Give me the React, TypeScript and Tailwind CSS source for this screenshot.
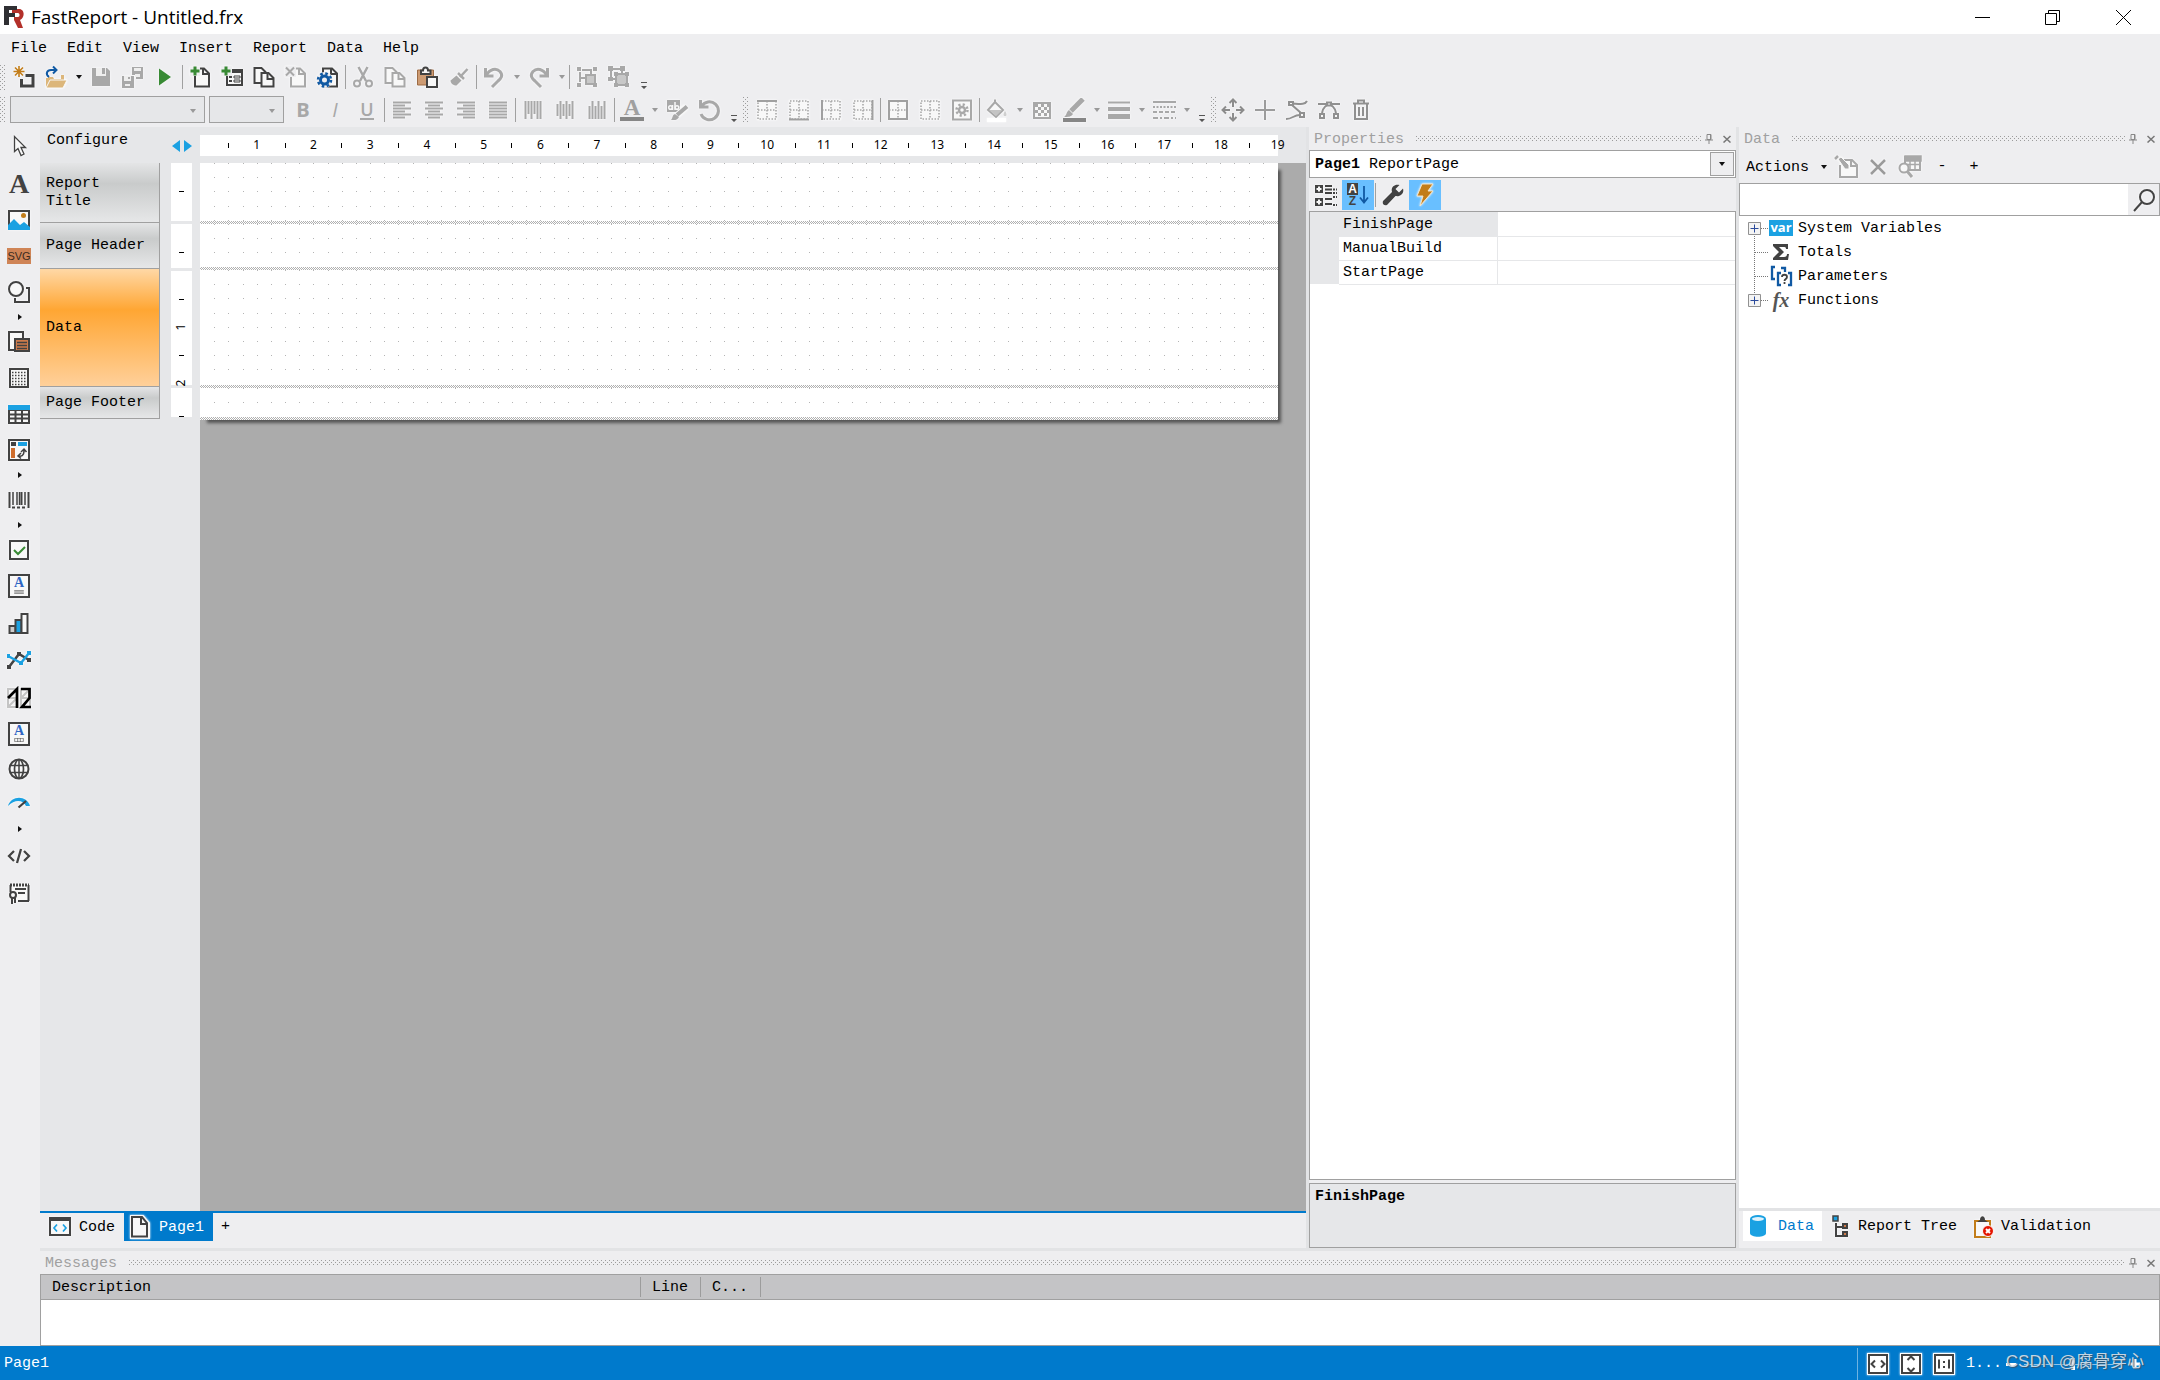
import React, { useId } from "react";

const D = "#424242";
const G = "#a8a8a8";
const W = "#f8f8f8";
const B = "#1ba1e2";
const N = "#1059a3";
const GR = "#388a34";
const OR = "#c27d1a";

const pagePath = "M7 3.500h9l5 5v13H7z";

const icons: Record<string, React.ReactNode> = {
  create: (
    <>
      <path d="M13.5 10.5H21v10.5H9.5v-7" fill="none" stroke={D} strokeWidth="3" />
      <path d="M7 1v11M1.500 6.500h11M3 2.500l8 8M11 2.500l-8 8" stroke={OR} strokeWidth="1.600" />
    </>
  ),
  open: (
    <>
      <path d="M2 22V13h2v-1h5l1 2h7l0-4h3v6" fill="#dcb67a" />
      <path d="M6 15h17l-4 8H2z" fill="#dcb67a" stroke={W} strokeWidth="1" />
      <path d="M5 12c-4-3-2-7 2-7h5M9 1.500L12.500 5 9 8.500" fill="none" stroke={N} strokeWidth="2" />
    </>
  ),
  save: (
    <>
      <path d="M3 3h15l3 3v15H3z" fill={G} />
      <path d="M7 3h10v8H7z" fill="#eee" />
      <path d="M13 3h3v6h-3z" fill={G} />
    </>
  ),
  saveAll: (
    <>
      <path d="M11 2h11v12h-7v-4h-4z" fill={G} />
      <path d="M13 3h7v3h-7zM14 9h5v3h-5z" fill="#eee" />
      <path d="M1 11h12v12H1z" fill={G} />
      <path d="M3 11h7v5H3zM4 19h5v2H4z" fill="#eee" />
      <path d="M7 12h2v2H7z" fill={G} />
    </>
  ),
  play: <path d="M6 3.500l12 8.500-12 8.500z" fill={GR} />,
  newPage: (
    <>
      <path d={pagePath} fill={W} stroke={D} strokeWidth="2" />
      <path d="M15 3v6h6" fill="none" stroke={D} strokeWidth="2" />
      <path d="M2 2h10v9H2z" fill="#eeeef0" />
      <path d="M7 1.500v9M2.500 6h9" stroke={GR} strokeWidth="3" />
    </>
  ),
  newDialog: (
    <>
      <path d="M7 5h15v15H7z" fill={W} stroke={D} strokeWidth="2" />
      <path d="M7 4h16v4H7z" fill={D} />
      <path d="M9 12h3M9 16h3" stroke={D} strokeWidth="2" />
      <path d="M14 11h6v2h-6zM14 15h6v2h-6z" fill="none" stroke={D} />
      <path d="M1 1h11v10H1z" fill="#eeeef0" />
      <path d="M6 1.500v9M1.500 6h9" stroke={GR} strokeWidth="3" />
    </>
  ),
  copyPage: (
    <>
      <path d="M2.500 3h7l4 4v11h-11z" fill={W} stroke={D} strokeWidth="2" />
      <path d="M9.500 8h7l5 5v8.500h-12z" fill={W} stroke={D} strokeWidth="2" />
      <path d="M15.500 8v6h6" fill="none" stroke={D} strokeWidth="2" />
    </>
  ),
  deletePage: (
    <>
      <path d={pagePath} fill={W} stroke={G} strokeWidth="2" />
      <path d="M15 3v6h6" fill="none" stroke={G} strokeWidth="2" />
      <path d="M1 1h11v11H1z" fill="#eeeef0" />
      <path d="M2 2.500l8 8M10 2.500l-8 8" stroke={G} strokeWidth="2" />
    </>
  ),
  pageSettings: (
    <>
      <path d={pagePath} fill={W} stroke={D} strokeWidth="2" />
      <path d="M15 3v6h6" fill="none" stroke={D} strokeWidth="2" />
      <circle cx="8.500" cy="15" r="8" fill="#eeeef0" />
      <circle cx="8.500" cy="15" r="4" fill="none" stroke={N} strokeWidth="3" />
      <circle cx="8.500" cy="15" r="6.500" fill="none" stroke={N} strokeWidth="2.500" strokeDasharray="2.550 2.550" />
    </>
  ),
  cut: (
    <g fill="none" stroke={G} strokeWidth="2">
      <path d="M7.500 2l7.500 14M16.500 2L9 16" strokeWidth="2.500" />
      <circle cx="6" cy="18.500" r="3" />
      <circle cx="18" cy="18.500" r="3" />
    </g>
  ),
  copy: (
    <>
      <path d="M2.500 3h7l4 4v11h-11z" fill={W} stroke={G} strokeWidth="2" />
      <path d="M9.500 8h7l5 5v8.500h-12z" fill={W} stroke={G} strokeWidth="2" />
      <path d="M15.500 8v6h6" fill="none" stroke={G} strokeWidth="2" />
    </>
  ),
  paste: (
    <>
      <path d="M2.500 5h16v15h-16z" fill="#cd9b73" stroke="#9c6b45" />
      <path d="M6 9V5.500h2C8 1.500 13 1.500 13 5.500h2.500V9z" fill={W} stroke={D} strokeWidth="2" />
      <path d="M12 12h10v10H12z" fill={W} stroke={D} strokeWidth="2" />
    </>
  ),
  brush: (
    <>
      <path d="M20.500 4L13 12" stroke={G} strokeWidth="2.500" />
      <path d="M11 8l6 6" stroke={G} strokeWidth="2.500" />
      <path d="M9.500 10.500l5 5-5 5c-3 0-6-2-6-5z" fill={G} />
    </>
  ),
  undo: (
    <path d="M3.500 3v8h8M4 10.500C8 4 14 2.500 18 6.500c3.500 4 1 7-2 9.500l-6 6" fill="none" stroke={G} strokeWidth="3" />
  ),
  redo: (
    <path d="M20.500 3v8h-8M20 10.500C16 4 10 2.500 6 6.500c-3.500 4-1 7 2 9.500l6 6" fill="none" stroke={G} strokeWidth="3" />
  ),
  group: (
    <>
      <path d="M5 7v10M7 5h9v8H5" fill="none" stroke={G} strokeWidth="2" />
      <path d="M11 10h9v9h-9z" fill="#c8c8c8" stroke={G} strokeWidth="2" />
      <path d="M2 2h4v4H2zM18 2h4v4h-4zM2 18h4v4H2zM18 18h4v4h-4z" fill={G} />
    </>
  ),
  ungroup: (
    <>
      <path d="M4 4h11v10H4z" fill="none" stroke={G} strokeWidth="2" />
      <path d="M9 9h11v11H9z" fill="#c8c8c8" stroke={G} strokeWidth="2" />
      <path d="M1 1h5v5H1zM13 1h5v5h-5zM1 12h5v4H1zM7 7h4v4H7zM18 7h4v4h-4zM7 18h4v4H7zM18 18h4v4h-4z" fill={G} />
    </>
  ),
  alignLeft: <path d="M3 4.500h18M3 7.500h12M3 10.500h18M3 13.500h12M3 16.500h18M3 19.500h12" stroke={G} strokeWidth="2" />,
  alignCenter: <path d="M3 4.500h18M6 7.500h12M3 10.500h18M6 13.500h12M3 16.500h18M6 19.500h12" stroke={G} strokeWidth="2" />,
  alignRight: <path d="M3 4.500h18M9 7.500h12M3 10.500h18M9 13.500h12M3 16.500h18M9 19.500h12" stroke={G} strokeWidth="2" />,
  alignJustify: <path d="M3 4.500h18M3 7.500h18M3 10.500h18M3 13.500h18M3 16.500h18M3 19.500h18" stroke={G} strokeWidth="2" />,
  vTop: <path d="M4.500 3v18M7.500 3v13M10.500 3v18M13.500 3v13M16.500 3v18M19.500 3v18" stroke={G} strokeWidth="2" />,
  vMiddle: <path d="M4.500 6v12M7.500 3v18M10.500 6v12M13.500 3v18M16.500 6v12M19.500 3v18" stroke={G} strokeWidth="2" />,
  vBottom: <path d="M4.500 8v13M7.500 3v18M10.500 8v13M13.500 3v18M16.500 8v13M19.500 3v18" stroke={G} strokeWidth="2" />,
  highlight: (
    <>
      <path d="M2 2h13v12H2z" fill={G} />
      <circle cx="5.500" cy="9.500" r="1.800" fill="none" stroke={W} strokeWidth="1.500" />
      <path d="M7.500 7v5M10 4v8" stroke={W} strokeWidth="1.500" />
      <circle cx="12" cy="9.500" r="1.800" fill="none" stroke={W} strokeWidth="1.500" />
      <path d="M21 9l-9 8" stroke={W} strokeWidth="6" />
      <path d="M22 8.500L12 17" stroke={G} strokeWidth="4" />
      <path d="M10 16l4 3c-2 4-5 3-8 3 2-2 1-5 4-6z" fill={G} />
    </>
  ),
  rotate: (
    <path d="M3.500 2v7h8M4.500 8.500A9 9 0 1 1 4 16" fill="none" stroke={G} strokeWidth="3" />
  ),
  borderTop: <BorderGrid solid="M2 3h20" />,
  borderBottom: <BorderGrid solid="M2 21.500h20" />,
  borderLeft: <BorderGrid solid="M3 2v20" />,
  borderRight: <BorderGrid solid="M21.500 2v20" />,
  borderAll: <BorderGrid solid="M3 3h18v18H3z" />,
  borderNone: <BorderGrid solid="" />,
  borderProps: (
    <>
      <path d="M3 2.500h18v19H3z" fill={W} stroke={G} strokeWidth="2" />
      <circle cx="12" cy="12" r="3" fill="none" stroke={G} strokeWidth="2.500" />
      <circle cx="12" cy="12" r="5.500" fill="none" stroke={G} strokeWidth="2.500" strokeDasharray="2.160 2.160" />
    </>
  ),
  fill: (
    <>
      <path d="M3 12l7-8 8 8-7 7z" fill={W} stroke={G} strokeWidth="2" />
      <path d="M4 12h13l-6 6z" fill="#c4c4c4" />
      <path d="M10 4V1.500" stroke={G} strokeWidth="2" />
      <path d="M20 13c2 3 2 5 0 5s-2-2 0-5z" fill="#cfcfcf" />
      <path d="M2 20h19v4H2z" fill="#fff" />
    </>
  ),
  hatch: (
    <>
      <path d="M4 5h16v15H4z" fill={W} stroke={G} strokeWidth="2" />
      <path
        d="M5 6h3v3H5zM11 6h3v3h-3zM17 6h3v3h-3zM8 9h3v3H8zM14 9h3v3h-3zM5 12h3v3H5zM11 12h3v3h-3zM17 12h3v3h-3zM8 15h3v3H8zM14 15h3v3h-3z"
        fill={G}
      />
    </>
  ),
  pen: (
    <>
      <path d="M21 1L9 13" stroke={G} strokeWidth="5" />
      <path d="M7 12l4 4c-2 3-5 3-9 3 3-2 2-5 5-7z" fill={G} />
      <path d="M1 20h23v4H1z" fill="#868686" />
    </>
  ),
  lineWidth: (
    <>
      <path d="M1 4.500h22" stroke={G} strokeWidth="2" />
      <path d="M1 11h22" stroke={G} strokeWidth="4" />
      <path d="M1 18.500h22" stroke={G} strokeWidth="5" />
    </>
  ),
  lineStyle: (
    <g stroke={G} strokeWidth="2">
      <path d="M1 4h23" />
      <path d="M1 9h23" strokeDasharray="2 1.500" />
      <path d="M1 14h23" strokeDasharray="4 2" />
      <path d="M1 20h23" strokeDasharray="5 2 2 2" />
    </g>
  ),
  move: (
    <g fill="none" stroke="#8c8c8c" strokeWidth="2">
      <path d="M12 9V2M12 15v7M9 12H2M15 12h7M8.500 5L12 1.500 15.500 5M8.500 19l3.500 3.500 3.500-3.500M5 8.500L1.500 12 5 15.500M19 8.500l3.500 3.500-3.500 3.500" />
    </g>
  ),
  cross: <path d="M12 2v20M2 12h20" stroke="#9c9c9c" strokeWidth="2" />,
  curve: (
    <g fill="none" stroke="#909090" strokeWidth="2">
      <path d="M1 21c7 0 7-4 14-4M22 3c-2 4-7 3-14 2.500M7 7l9 8" />
      <path d="M4 4h4v3H4zM15 15h4v4h-4z" fill={W} />
    </g>
  ),
  bezier: (
    <g fill="none" stroke="#909090" strokeWidth="2">
      <path d="M1 6h22M10 7C7 9 5 12 5 17M14 7c3 2 5 5 5 10" />
      <path d="M10 4.500h4v3h-4zM3 16h4v4H3zM17 16h4v4h-4z" fill={W} />
    </g>
  ),
  trash: (
    <g fill="none" stroke="#909090" strokeWidth="2">
      <path d="M4 5.500h16M9 5V2.500h6V5M6 6v15h12V6M10 9v9M14 9v9" />
    </g>
  ),
  pointer: (
    <path d="M7.500 2.500v15l3.500-3 3 7 3-1.500-3-6.500h4.500z" fill={W} stroke={D} strokeWidth="1.300" />
  ),
  picture: (
    <>
      <path d="M2 3h20v18H2z" fill={W} stroke={D} strokeWidth="2" />
      <circle cx="16.500" cy="7.500" r="2.500" fill={OR} />
      <path d="M1 17l6-6 6 6 4-3 6 5v3H1z" fill={B} />
    </>
  ),
  shapes: (
    <g fill="none" stroke={D} strokeWidth="2">
      <path d="M19 8h3v14H8v-4" />
      <circle cx="9" cy="9" r="7" fill={W} />
    </g>
  ),
  subreport: (
    <>
      <path d="M2 2h14v18H2z" fill={W} stroke={D} strokeWidth="2" />
      <path d="M8 9h14v12H8z" fill="#cf7b4b" stroke={D} strokeWidth="2" />
      <path d="M10 12.500h10M10 15.500h10M10 18.500h10" stroke={D} strokeWidth="1.500" />
    </>
  ),
  gridDots: (
    <>
      <path d="M3 3h18v18H3z" fill={W} stroke={D} strokeWidth="2" />
      <path d="M5 6.500h14M5 9.500h14M5 12.500h14M5 15.500h14M5 18.500h14" stroke={D} strokeWidth="1.500" strokeDasharray="1.500 1.500" />
    </>
  ),
  table: (
    <>
      <path d="M2 7h20v13H2zM2 11.500h20M2 15.500h20M8.500 7v13M15 7v13" fill={W} stroke={D} strokeWidth="2" />
      <path d="M1 2h22v5H1z" fill={B} />
    </>
  ),
  matrix: (
    <>
      <path d="M2 2h20v20H2z" fill={W} stroke={D} strokeWidth="2" />
      <path d="M4 4h5v4H4z" fill={D} />
      <path d="M11 4h9v4h-9z" fill={B} />
      <path d="M4 10h4v10H4z" fill="#cf6d2c" />
      <path d="M12 18c5 1 5-4 5-6M14 14l3-3 2.500 3M14 15l-3 3 3 2.500" fill="none" stroke={D} strokeWidth="1.500" />
    </>
  ),
  barcode: (
    <>
      <path d="M2.500 4v16M14.500 4v13M21.500 4v16" stroke={D} strokeWidth="2" />
      <path d="M6 4v13M10 4v13M12.500 4v13M18 4v13" stroke={D} strokeWidth="1.500" />
      <path d="M5 19.500h14" stroke={D} strokeWidth="2" strokeDasharray="3 2" />
    </>
  ),
  check: (
    <>
      <path d="M3 3h18v18H3z" fill={W} stroke={D} strokeWidth="2" />
      <path d="M7 12l4 4 7-7" fill="none" stroke={GR} strokeWidth="2" />
    </>
  ),
  chart: (
    <g stroke={D} strokeWidth="2">
      <path d="M2.500 15h6v7h-6z" fill="#ccc" />
      <path d="M8.500 9h6v13h-6z" fill={B} />
      <path d="M14.500 3h6v19h-6z" fill={W} />
    </g>
  ),
  sparkline: (
    <g fill="none" strokeWidth="2.500">
      <path d="M2 19L12 6l10 6" stroke={D} />
      <path d="M1 8l13 7 8-10" stroke={B} />
      <path d="M0 17h4v4H0zM10 4h4v4h-4zM20 10h4v4h-4z" fill={D} stroke="none" />
      <path d="M0 6h3v4H0zM12 13h4v4h-4zM20 3h4v4h-4z" fill={B} stroke="none" />
    </g>
  ),
  zip: (
    <>
      <path d="M1 3h9v18H1zM14 3h9v18h-9zM1 12h9M14 12h9M1 21l9-9M14 12l9-9" fill="none" stroke="#c4c4c4" strokeWidth="2" />
      <path d="M1 12l9-9v19M14 3h8.500v9L15 21h9" fill="none" stroke="#000" strokeWidth="2.700" />
    </>
  ),
  globe: (
    <g fill="none" stroke={D} strokeWidth="2">
      <circle cx="12" cy="12" r="9.500" fill={W} />
      <ellipse cx="12" cy="12" rx="4.500" ry="9.500" strokeWidth="1.700" />
      <path d="M3.500 8.500h17M3.500 15.500h17M12 2.500v19" strokeWidth="1.500" />
    </g>
  ),
  gauge: (
    <>
      <path d="M1 14C4 3 20 3 23 14h-4C16 8 8 7 1 14z" fill={B} />
      <path d="M11.500 15.500L19 9" stroke={D} strokeWidth="2.300" />
    </>
  ),
  html: (
    <path d="M7 7l-5 5 5 5M17 7l5 5-5 5M14 5l-4 14" fill="none" stroke={D} strokeWidth="2.300" />
  ),
  signature: (
    <g fill="none" stroke={D} strokeWidth="2">
      <path d="M3 10V4h19v16H11" fill={W} stroke="none" />
      <path d="M3.500 11V4M21.500 4v16M11 20h11" />
      <path d="M3 4h19" strokeWidth="3" strokeDasharray="2 1" />
      <path d="M8 8h11M11 12h7" />
      <circle cx="6" cy="14" r="3" fill={W} />
      <path d="M5 17v6M8 17v5" />
    </g>
  ),
  categories: (
    <>
      <path d="M1 2h8v8H1zM1 15h8v8H1z" fill={D} />
      <path d="M2.500 6h5M5 3.500v5M2.500 19h5M5 16.500v5" stroke={W} strokeWidth="2" />
      <path d="M11 3h7M11 6.500h7M11 10h7M11 16h7M11 21h7" stroke={D} strokeWidth="2" />
      <path d="M19 6.500h4M19 10h4M19 14h4M19 22h4" stroke={D} strokeWidth="2" strokeDasharray="2 1" />
    </>
  ),
  wrench: (
    <path d="M22 5.500l-4 4-3.500-3.500 4-4c-5-1.500-9 2.500-7.500 7L2 18c-1 3 1 5 4 4l8.500-9c5 1 9-3 7.500-7.500z" fill={D} />
  ),
  bolt: <path d="M9 1h11l-5 7h5L7 23l3-10H4z" fill={OR} stroke="#f3e4c8" />,
  editSmall: (
    <>
      <path d="M10 5h8l5 5v12H6V10" fill={W} stroke={G} strokeWidth="2" />
      <path d="M17 5v6h6" fill="none" stroke={G} strokeWidth="2" />
      <path d="M4 4l3-2 8 8v4h-4z" fill={G} stroke={W} strokeWidth="1" />
      <path d="M1 4l3-3" stroke={G} strokeWidth="2.500" />
    </>
  ),
  remove: <path d="M5 5l14 14M19 5L5 19" stroke="#9b9b9b" strokeWidth="2.500" />,
  viewData: (
    <>
      <path d="M7 2h15v13H7z" fill={W} stroke={G} strokeWidth="2" />
      <path d="M7 1h16v5H7zM7 9.500h15M12 5v10M17 5v10" fill={G} stroke={G} strokeWidth="1.500" />
      <circle cx="6" cy="13" r="4.500" fill={W} stroke={G} strokeWidth="2" />
      <path d="M9 16l5 6" stroke={G} strokeWidth="3" />
    </>
  ),
  search: (
    <g fill="none" stroke="#444" strokeWidth="2">
      <circle cx="15" cy="9" r="7" />
      <path d="M10 14l-8 9" />
    </g>
  ),
  database: (
    <>
      <path d="M4 5v14c0 5 16 5 16 0V5z" fill={B} />
      <ellipse cx="12" cy="5" rx="7" ry="3" fill="#dff2fc" stroke={B} strokeWidth="2" />
    </>
  ),
  treeView: (
    <>
      <path d="M4 2h5v5H4z" fill={B} stroke={D} strokeWidth="1.500" />
      <path d="M7 9v13h6M7 13h6" fill="none" stroke={D} strokeWidth="2" />
      <path d="M14 10h4v4h-4zM14 18h4v4h-4z" fill="#cf7b4b" stroke={D} strokeWidth="2" />
    </>
  ),
  clipboard: (
    <>
      <path d="M3 7h15v16H3z" fill={W} stroke={OR} strokeWidth="2" />
      <path d="M5 8l3-2c0-5 5-5 5 0l3 2z" fill={D} />
      <circle cx="16" cy="17" r="5.500" fill="#e51400" stroke={W} />
      <path d="M14 15l4 4M18 15l-4 4" stroke="#fff" strokeWidth="2" />
    </>
  ),
  codeWindow: (
    <>
      <path d="M2 3h20v17H2z" fill={W} stroke={D} strokeWidth="2" />
      <path d="M1 2h22v4H1z" fill={D} />
      <path d="M9 9.500L6 13l3 3.500M15 9.500l3 3.500-3 3.500" fill="none" stroke={B} strokeWidth="1.700" />
    </>
  ),
  page: (
    <>
      <path d="M3 1h12l6 7v15H3z" fill={W} stroke={W} strokeWidth="2" />
      <path d="M4 2h10l5 6v13.500H4z" fill={W} stroke={D} strokeWidth="2" />
      <path d="M13 2v7h6" fill="none" stroke={D} strokeWidth="2" />
    </>
  ),
  fitWidth: <ZoomBox d="M9 8.500L5.500 12 9 15.500M15 8.500l3.500 3.500-3.500 3.500" />,
  fitPage: <ZoomBox d="M8.500 8L12 4.500 15.500 8M8.500 16l3.500 3.500 3.500-3.500" />,
  actualSize: <ZoomBox d="M7 7.500v9M17 7.500v9M11 10h2M11 15h2" />,
};

function BorderGrid({ solid }: { solid: string }) {
  return (
    <>
      <path d="M2 2h20v20H2z" fill={W} />
      <path d="M3 3h18v18H3zM3 12h18M12 3v18" fill="none" stroke={G} strokeWidth="1.600" strokeDasharray="1.500 1.500" />
      <path d={solid} fill="none" stroke="#a0a0a0" strokeWidth="2" />
    </>
  );
}

function ZoomBox({ d }: { d: string }) {
  return (
    <>
      <path d="M1 1h22v22H1z" fill="#fff" />
      <path d="M3 3h18v18H3z" fill="#fff" stroke={D} strokeWidth="2" />
      <path d={d} fill="none" stroke={D} strokeWidth="2" />
    </>
  );
}

function Icon({ name }: { name: string }) {
  return (
    <svg viewBox="0 0 24 24" className="h-6 w-6 shrink-0 drop-shadow-[0_0_1px_#fff]" aria-hidden="true">
      {icons[name]}
    </svg>
  );
}

function Tool({ name, label, children }: { name?: string; label: string; children?: React.ReactNode }) {
  return (
    <button type="button" aria-label={label} title={label} className="flex h-7 w-8 shrink-0 items-center justify-center">
      {name ? <Icon name={name} /> : children}
    </button>
  );
}

function Caret({ dark }: { dark?: boolean }) {
  return (
    <button type="button" aria-label="More options" className="flex h-7 w-[13px] shrink-0 items-center justify-center">
      <svg viewBox="0 0 6 4" className="h-1 w-1.5" aria-hidden="true">
        <path d="M0 0h6L3 4z" fill={dark ? "#111" : "#999"} />
      </svg>
    </button>
  );
}

function Sep() {
  return (
    <span className="flex w-[3px] shrink-0 justify-center">
      <span className="h-6 w-px bg-[#a0a0a0]" />
    </span>
  );
}

function Overflow() {
  return (
    <button type="button" aria-label="Toolbar options" className="flex h-7 w-[18px] shrink-0 items-end justify-center pb-px">
      <svg viewBox="0 0 6 8" className="h-2 w-1.5" aria-hidden="true">
        <path d="M0 0h6v1H0zM0 4h6L3 7z" fill="#555" />
      </svg>
    </button>
  );
}

function DotPattern({ className }: { className: string }) {
  const id = useId();
  return (
    <svg className={className} aria-hidden="true">
      <defs>
        <pattern id={id} width="4" height="4" patternUnits="userSpaceOnUse">
          <path d="M0 0h1v1H0zM2 2h1v1H2z" fill="#9c9c9c" />
        </pattern>
      </defs>
      <rect width="100%" height="100%" fill={`url(#${id})`} />
    </svg>
  );
}

const Grip = () => <DotPattern className="h-[25px] w-[5px] shrink-0" />;

function PanelHeader({ title }: { title: string }) {
  return (
    <div className="flex h-[23px] shrink-0 items-center pr-[5px] pl-[5px] text-[#a0a0a0]">
      <h2 className="pt-0.5">{title}</h2>
      <DotPattern className="ml-3 h-[5px] min-w-0 flex-1" />
      <button type="button" aria-label={`Pin ${title}`} className="ml-1">
        <svg viewBox="0 0 8 10" className="h-2.5 w-2" aria-hidden="true">
          <path d="M2 0.500h4v5H2zM5.500 1v4M0 6h8M4 6v4" fill="none" stroke="#888" />
        </svg>
      </button>
      <button type="button" aria-label={`Close ${title}`} className="ml-2.5">
        <svg viewBox="0 0 8 8" className="h-2 w-2" aria-hidden="true">
          <path d="M0.500 1l7 6.500M7.500 1l-7 6.500" stroke="#777" strokeWidth="1.500" />
        </svg>
      </button>
    </div>
  );
}

function TitleBar() {
  return (
    <header className="flex h-[34px] shrink-0 items-center bg-white">
      <svg viewBox="0 0 20 22" className="ml-1 h-[22px] w-5" aria-hidden="true">
        <path d="M8 3h7c6 0 6 9 1 11l3 8h-5l-4-8v-3h4c2 0 2-4 0-4H8z" fill="#b3302a" />
        <path d="M0 0h13v4H5v3h6v4H5v8H0z" fill="#2f2f33" />
      </svg>
      <h1 className="ml-[7px] font-['Open_Sans','Noto_Sans',sans-serif] text-[19px] leading-6 text-black">FastReport - Untitled.frx</h1>
      <div className="ml-auto flex items-center">
        <button type="button" aria-label="Minimize" className="flex h-[34px] w-[70px] items-center justify-center">
          <svg viewBox="0 0 15 15" className="h-[15px] w-[15px]"><path d="M0 7.500h15" stroke="#000" /></svg>
        </button>
        <button type="button" aria-label="Restore" className="flex h-[34px] w-[70px] items-center justify-center">
          <svg viewBox="0 0 15 15" className="h-[15px] w-[15px]">
            <path d="M0.500 3.500h11v11H0.500zM3.500 3.500v-3h11v11h-3" fill="none" stroke="#000" />
          </svg>
        </button>
        <button type="button" aria-label="Close" className="flex h-[34px] w-[73px] items-center justify-center">
          <svg viewBox="0 0 15 15" className="h-[15px] w-[15px]"><path d="M0 0l15 15M15 0L0 15" stroke="#000" /></svg>
        </button>
      </div>
    </header>
  );
}

function MenuBar() {
  return (
    <nav className="flex h-7 shrink-0 items-center pt-0.5 pl-px">
      {["File", "Edit", "View", "Insert", "Report", "Data", "Help"].map((m) => (
        <button key={m} type="button" className="px-2.5">
          {m}
        </button>
      ))}
    </nav>
  );
}

function MainToolbar() {
  return (
    <div className="flex h-[30px] shrink-0 items-center" role="toolbar" aria-label="Standard">
      <Grip />
      <span className="w-[3px]" />
      <Tool name="create" label="New report" />
      <Tool name="open" label="Open" />
      <Caret dark />
      <Tool name="save" label="Save" />
      <Tool name="saveAll" label="Save all" />
      <Tool name="play" label="Preview" />
      <Sep />
      <Tool name="newPage" label="New page" />
      <Tool name="newDialog" label="New dialog" />
      <Tool name="copyPage" label="Copy page" />
      <Tool name="deletePage" label="Delete page" />
      <Tool name="pageSettings" label="Page setup" />
      <Sep />
      <Tool name="cut" label="Cut" />
      <Tool name="copy" label="Copy" />
      <Tool name="paste" label="Paste" />
      <Tool name="brush" label="Format painter" />
      <Sep />
      <Tool name="undo" label="Undo" />
      <Caret />
      <Tool name="redo" label="Redo" />
      <Caret />
      <Sep />
      <Tool name="group" label="Group" />
      <Tool name="ungroup" label="Ungroup" />
      <Overflow />
    </div>
  );
}

function Combo({ label, className }: { label: string; className: string }) {
  return (
    <span className={className}>
      <select aria-label={label} disabled className="h-full w-full appearance-none bg-transparent">
        <option value="" />
      </select>
      <svg viewBox="0 0 6 4" className="pointer-events-none absolute top-3 right-2 h-1 w-1.5" aria-hidden="true">
        <path d="M0 0h6L3 4z" fill="#999" />
      </svg>
    </span>
  );
}

function FormatToolbar() {
  return (
    <div className="flex h-[35px] shrink-0 items-center" role="toolbar" aria-label="Formatting">
      <Grip />
      <Combo label="Font name" className="relative ml-[5px] h-[27px] w-[195px] border border-[#a0a0a0] bg-[#e6e7e9]" />
      <Combo label="Font size" className="relative mr-[3px] ml-1 h-[27px] w-[75px] border border-[#a0a0a0] bg-[#e6e7e9]" />
      <Tool label="Bold">
        <span className="font-['Open_Sans',sans-serif] text-xl leading-6 font-bold text-[#a8a8a8]">B</span>
      </Tool>
      <Tool label="Italic">
        <span className="font-['Open_Sans',sans-serif] text-xl leading-6 text-[#a8a8a8] italic">I</span>
      </Tool>
      <Tool label="Underline">
        <span className="border-b-2 border-[#a8a8a8] font-['Open_Sans',sans-serif] text-lg leading-[18px] font-semibold text-[#a8a8a8]">U</span>
      </Tool>
      <Sep />
      <Tool name="alignLeft" label="Align left" />
      <Tool name="alignCenter" label="Align center" />
      <Tool name="alignRight" label="Align right" />
      <Tool name="alignJustify" label="Justify" />
      <Sep />
      <Tool name="vTop" label="Align top" />
      <Tool name="vMiddle" label="Align middle" />
      <Tool name="vBottom" label="Align bottom" />
      <Sep />
      <Tool label="Text color">
        <span className="flex w-6 flex-col items-center border-b-4 border-[#868686] font-['Liberation_Serif',serif] text-[23px] leading-[18px] font-bold text-[#a0a0a0]">A</span>
      </Tool>
      <Caret />
      <Tool name="highlight" label="Highlight" />
      <Tool name="rotate" label="Rotate text" />
      <Overflow />
      <Grip />
      <span className="w-[3px]" />
      <Tool name="borderTop" label="Top border" />
      <Tool name="borderBottom" label="Bottom border" />
      <Tool name="borderLeft" label="Left border" />
      <Tool name="borderRight" label="Right border" />
      <Sep />
      <Tool name="borderAll" label="All borders" />
      <Tool name="borderNone" label="No borders" />
      <Tool name="borderProps" label="Border properties" />
      <Sep />
      <Tool name="fill" label="Fill color" />
      <Caret />
      <Tool name="hatch" label="Fill style" />
      <Tool name="pen" label="Line color" />
      <Caret />
      <Tool name="lineWidth" label="Line width" />
      <Caret />
      <Tool name="lineStyle" label="Line style" />
      <Caret />
      <Overflow />
      <Grip />
      <span className="w-px" />
      <Tool name="move" label="Move points" />
      <Tool name="cross" label="Add point" />
      <Tool name="curve" label="Bend" />
      <Tool name="bezier" label="Curve" />
      <Tool name="trash" label="Delete point" />
    </div>
  );
}

const H34 = "flex h-[34px] items-center justify-center";
const H36 = "flex h-9 items-center justify-center";
const H38 = "flex h-[38px] items-center justify-center";

function LetterBox({ boxes }: { boxes?: boolean }) {
  return (
    <span className="flex h-6 w-[22px] flex-col items-center justify-between border-2 border-[#424242] bg-[#f8f8f8] pb-0.5 font-['Liberation_Serif',serif] text-sm leading-[14px] font-bold text-[#2f66c4]">
      A
      {boxes ? (
        <svg viewBox="0 0 14 6" className="h-1.5 w-3.5"><path d="M0.500 0.500h13v5h-13zM5 0v6M9 0v6" fill="none" stroke="#555" /></svg>
      ) : (
        <svg viewBox="0 0 14 5" className="h-[5px] w-3.5"><path d="M1 1h12M1 4h12" stroke="#777" strokeWidth="1.500" /></svg>
      )}
    </span>
  );
}

function ObjectsToolbar() {
  const items: { h: string; icon?: string; label: string; node?: React.ReactNode }[] = [
    { h: H38, icon: "pointer", label: "Select" },
    {
      h: H38,
      label: "Text",
      node: <span className="font-['Liberation_Serif',serif] text-[28px] leading-6 font-bold text-[#424242]">A</span>,
    },
    { h: H34, icon: "picture", label: "Picture" },
    {
      h: H38,
      label: "SVG",
      node: <span className="h-4 w-6 bg-[#cf8456] text-center font-['Liberation_Sans',sans-serif] text-[11px] leading-4 text-[#3c2b20]">SVG</span>,
    },
    { h: H34, icon: "shapes", label: "Shape" },
    { h: "arrow", label: "More shapes" },
    { h: H34, icon: "subreport", label: "Subreport" },
    { h: H38, icon: "gridDots", label: "Container" },
    { h: H36, icon: "table", label: "Table" },
    { h: H34, icon: "matrix", label: "Matrix" },
    { h: "arrow", label: "More matrices" },
    { h: H34, icon: "barcode", label: "Barcode" },
    { h: "arrow", label: "More barcodes" },
    { h: H34, icon: "check", label: "Check box" },
    { h: H38, label: "Rich text", node: <LetterBox /> },
    { h: H36, icon: "chart", label: "Chart" },
    { h: H38, icon: "sparkline", label: "Sparkline" },
    { h: H38, icon: "zip", label: "Zip code" },
    { h: H34, label: "Cellular text", node: <LetterBox boxes /> },
    { h: H36, icon: "globe", label: "Map" },
    { h: H34, icon: "gauge", label: "Gauge" },
    { h: "arrow", label: "More gauges" },
    { h: H38, icon: "html", label: "HTML" },
    { h: H36, icon: "signature", label: "Digital signature" },
  ];
  return (
    <div className="flex w-10 shrink-0 flex-col" role="toolbar" aria-label="Objects">
      {items.map((it) =>
        it.h === "arrow" ? (
          <button key={it.label} type="button" aria-label={it.label} className="flex h-4 items-center justify-center">
            <svg viewBox="0 0 4 6" className="h-1.5 w-1"><path d="M0 0l4 3-4 3z" fill="#111" /></svg>
          </button>
        ) : (
          <button key={it.label} type="button" aria-label={it.label} className={`${it.h} pr-0.5`}>
            {it.icon ? <Icon name={it.icon} /> : it.node}
          </button>
        ),
      )}
    </div>
  );
}

const greyBand =
  "flex items-center border-r border-b border-[#a0a0a0] bg-[linear-gradient(#e4e5e6,#c9cbcb_35%,#e6e7e8)] pl-1.5 text-left";

function gridPath(height: number) {
  let d = "";
  for (let j = 0; j * 14.17 < height; j++) {
    for (let i = 1; i < 76; i++) {
      d += `M${Math.round(i * 14.17)} ${Math.round(j * 14.17)}h1v1h-1z`;
    }
  }
  return d;
}

function PageBand({ className, height }: { className: string; height: number }) {
  return (
    <div className={className}>
      <svg className="min-h-0 w-full flex-1" aria-hidden="true">
        <path d={gridPath(height)} fill="#b4b4b4" />
      </svg>
      <div className="h-[3px] bg-[conic-gradient(#b0b0b0_25%,#fff_0_50%,#b0b0b0_0_75%,#fff_0)] bg-[size:2px_2px]" />
    </div>
  );
}

function VRuler({ className, marks }: { className: string; marks: string[] }) {
  return (
    <div className={className}>
      <span className="h-0" />
      {marks.map((m, i) => (
        <span key={i} className="relative z-10 flex h-0 items-center justify-center">
          {m === "-" ? <span className="h-px w-[5px] shrink-0 bg-black" /> : <span className="-rotate-90">{m}</span>}
        </span>
      ))}
    </div>
  );
}

function Designer() {
  const half = Array.from({ length: 39 }, (_, i) => i);
  return (
    <section className="flex min-w-0 flex-1 flex-col">
      <div className="flex min-h-0 flex-1 bg-[#e6e7e9]">
        <div className="flex w-[120px] shrink-0 flex-col">
          <button type="button" className="h-9 pb-2 pl-[7px] text-left">
            Configure
          </button>
          <button type="button" className={`${greyBand} h-[60px]`}>
            <span>
              Report
              <br />
              Title
            </span>
          </button>
          <button type="button" className={`${greyBand} h-[46px]`}>Page Header</button>
          <button
            type="button"
            className="flex h-[118px] items-center border-r border-b border-[#a0a0a0] bg-[linear-gradient(#ffd8a6,#ffa633_35%,#ffd09a)] pl-1.5 text-left"
          >
            Data
          </button>
          <button type="button" className={`${greyBand} h-8`}>Page Footer</button>
        </div>
        <div className="flex w-10 shrink-0 flex-col items-center pl-[3px] font-['Noto_Sans',sans-serif] text-xs text-black">
          <button type="button" aria-label="Toggle ruler" className="flex h-9 items-center pt-0.5">
            <svg viewBox="0 0 20 12" className="h-3 w-5"><path d="M8 0v12L0 6zM12 0v12l8-6z" fill={B} /></svg>
          </button>
          <div className="flex flex-col gap-[3px]">
            <VRuler className="flex h-[58px] w-[21px] flex-col gap-7 bg-white" marks={["-"]} />
            <VRuler className="flex h-11 w-[21px] flex-col gap-7 bg-white" marks={["-"]} />
            <VRuler className="flex h-[114px] w-[21px] flex-col gap-7 bg-white" marks={["-", "1", "-", "2"]} />
            <VRuler className="flex h-[29px] w-[21px] flex-col gap-7 bg-white" marks={["-"]} />
          </div>
        </div>
        <div className="flex min-w-0 flex-1 flex-col">
          <div className="flex h-9 shrink-0 items-center">
            <div className="flex h-[21px] w-[1078px] items-center justify-between bg-white font-['Noto_Sans',sans-serif] text-xs text-black">
              {half.map((i) => (
                <span key={i} className="flex w-0 items-center justify-center">
                  {i % 2 === 1 ? <span className="h-[5px] w-px shrink-0 bg-black" /> : i > 0 ? <span>{i / 2}</span> : null}
                </span>
              ))}
            </div>
          </div>
          <div className="min-h-0 flex-1 bg-[#ababab]">
            <div className="w-[1078px] bg-white shadow-[5px_5px_3px_-2px_rgba(0,0,0,0.5)]">
              <PageBand className="flex h-[61px] flex-col" height={58} />
              <PageBand className="flex h-[46px] flex-col" height={43} />
              <PageBand className="flex h-[118px] flex-col" height={112} />
              <PageBand className="flex h-8 flex-col" height={28} />
            </div>
          </div>
        </div>
      </div>
      <div className="flex h-[37px] shrink-0 items-start border-t-2 border-[#007acc]">
        <button type="button" className="flex h-7 items-center gap-[7px] pr-[9px] pl-2">
          <Icon name="codeWindow" />
          <span className="pt-0.5">Code</span>
        </button>
        <button type="button" className="flex h-7 items-center gap-[7px] bg-[#007acc] pr-[9px] pl-1 text-white">
          <Icon name="page" />
          <span className="pt-0.5">Page1</span>
        </button>
        <button type="button" aria-label="Add page" className="flex h-7 items-center px-2">
          +
        </button>
      </div>
    </section>
  );
}

function PropertiesPanel() {
  return (
    <aside className="flex w-[427px] shrink-0 flex-col">
      <PanelHeader title="Properties" />
      <button
        type="button"
        aria-haspopup="listbox"
        className="flex h-7 shrink-0 items-center border border-[#a0a0a0] bg-white pr-px pl-[5px] text-left"
      >
        <b className="pt-0.5">Page1</b>
        <span className="ml-[9px] pt-0.5">ReportPage</span>
        <span className="ml-auto flex h-6 w-6 items-center justify-center border border-[#a0a0a0] bg-[#eeeef0]">
          <svg viewBox="0 0 6 4" className="h-1 w-1.5"><path d="M0 0h6L3 4z" fill="#111" /></svg>
        </span>
      </button>
      <div className="flex h-[33px] shrink-0 items-center pl-px" role="toolbar" aria-label="Property view">
        <Tool name="categories" label="Categorized" />
        <button type="button" aria-label="Alphabetical" aria-pressed="true" className="flex h-[30px] w-8 items-center justify-center gap-px bg-[#69bfff]">
          <span className="flex flex-col text-center font-['Liberation_Sans',sans-serif] text-xs leading-3 font-bold">
            <span className="w-[11px] bg-[#424242] text-white">A</span>
            <span className="text-[#424242]">Z</span>
          </span>
          <svg viewBox="0 0 10 18" className="h-[18px] w-2.5"><path d="M5 0v16M1 11.500l4 5 4-5" fill="none" stroke={N} strokeWidth="1.800" /></svg>
        </button>
        <Sep />
        <Tool name="wrench" label="Properties" />
        <button type="button" aria-label="Events" aria-pressed="true" className="flex h-[30px] w-8 items-center justify-center bg-[#69bfff]">
          <Icon name="bolt" />
        </button>
      </div>
      <div className="min-h-0 flex-1 border border-[#a0a0a0] bg-white">
        <table className="w-full border-collapse text-left">
          <tbody>
            {["FinishPage", "ManualBuild", "StartPage"].map((n, i) => (
              <tr key={n} className="h-6">
                <td className="w-[29px] bg-[#e6e7e9]" />
                <th
                  scope="row"
                  className={
                    i === 0
                      ? "w-[158px] border-r border-b border-[#e6e7e9] bg-[#e6e7e9] pt-0.5 pl-1 font-normal"
                      : "w-[158px] border-r border-b border-[#e6e7e9] pt-0.5 pl-1 font-normal"
                  }
                >
                  {n}
                </th>
                <td className="border-b border-[#e6e7e9]" />
              </tr>
            ))}
          </tbody>
        </table>
      </div>
      <div className="mt-[3px] h-[65px] shrink-0 border border-[#a0a0a0] bg-[#e6e7e9] px-[5px] pt-1 font-bold">FinishPage</div>
    </aside>
  );
}

function TreeRow({ label, expandable, first, last, children }: { label: string; expandable?: boolean; first?: boolean; last?: boolean; children: React.ReactNode }) {
  return (
    <li className="flex h-6 items-center pl-[9px]" role="treeitem" aria-expanded={expandable ? false : undefined}>
      <svg viewBox="0 0 21 24" className="h-6 w-[21px] shrink-0" aria-hidden="true">
        <path
          d={`M6.500 ${first ? 12 : 0}V${last ? 12 : 24}M7 12.500h14`}
          stroke="#777"
          strokeDasharray="1 1"
          fill="none"
        />
        {expandable && (
          <>
            <path d="M0.500 6.500h12v12h-12z" fill="#f4f4f4" stroke="#919191" />
            <path d="M6.500 8.500v8M2.500 12.500h8" stroke="#2b4a9b" />
          </>
        )}
      </svg>
      <span className="flex w-6 shrink-0 justify-center">{children}</span>
      <span className="ml-[5px] pt-0.5">{label}</span>
    </li>
  );
}

function DataPanel() {
  return (
    <aside className="flex w-[421px] shrink-0 flex-col">
      <PanelHeader title="Data" />
      <div className="flex h-[33px] shrink-0 items-center pl-[7px]">
        <button type="button" className="flex items-center">
          <span className="pt-0.5">Actions</span>
          <svg viewBox="0 0 6 4" className="ml-3 h-1 w-1.5"><path d="M0 0h6L3 4z" fill="#111" /></svg>
        </button>
        <span className="w-[3px]" />
        <Tool name="editSmall" label="Edit" />
        <Tool name="remove" label="Delete" />
        <Tool name="viewData" label="View data" />
        <Tool label="Collapse all">-</Tool>
        <Tool label="Expand all">+</Tool>
      </div>
      <div className="flex h-[33px] shrink-0 border border-[#a0a0a0] bg-white">
        <input type="text" aria-label="Search data" className="min-w-0 flex-1 bg-white px-1 outline-none" />
        <button type="button" aria-label="Search" className="flex w-[31px] items-center justify-center bg-[#eeeef0]">
          <Icon name="search" />
        </button>
      </div>
      <ul className="min-h-0 flex-1 bg-white" role="tree" aria-label="Data">
        <TreeRow label="System Variables" expandable first>
          <span className="h-4 w-6 bg-[#1ba1e2] text-center font-['Open_Sans',sans-serif] text-[13px] leading-[14px] font-bold text-white">var</span>
        </TreeRow>
        <TreeRow label="Totals">
          <svg viewBox="0 0 18 18" className="h-[18px] w-[18px]">
            <path d="M1 1h15v5h-2c0-2-1-2-3-2H7l5 5-5 5h5c2 0 3-1 3-3h2l-1 6H1v-2l6-6-6-6z" fill={D} />
          </svg>
        </TreeRow>
        <TreeRow label="Parameters">
          <svg viewBox="0 0 24 22" className="h-[22px] w-6">
            <path d="M6 2H3v12h3M12 3h4v4M12 8H9v12h3M19 8h3v12h-3" fill="none" stroke={N} strokeWidth="2.300" />
            <path d="M13 12c0-3 5-3 5 0 0 2-2.500 2-2.500 4M15.500 17v2" fill="none" stroke={D} strokeWidth="1.800" />
          </svg>
        </TreeRow>
        <TreeRow label="Functions" expandable last>
          <span className="font-['Liberation_Serif',serif] text-xl leading-5 font-bold text-[#555] italic">fx</span>
        </TreeRow>
      </ul>
      <div className="flex h-10 shrink-0 items-start border-t-[3px] border-[#e2e3e5] pl-1" role="tablist">
        <button type="button" role="tab" aria-selected="true" className="flex h-[30px] items-center gap-2 bg-white pr-2 pl-[3px] text-[#007acc]">
          <Icon name="database" />
          <span className="pt-0.5">Data</span>
        </button>
        <button type="button" role="tab" aria-selected="false" className="ml-[7px] flex h-[30px] items-center gap-[5px]">
          <Icon name="treeView" />
          <span className="pt-0.5">Report Tree</span>
        </button>
        <button type="button" role="tab" aria-selected="false" className="ml-[15px] flex h-[30px] items-center gap-[5px]">
          <Icon name="clipboard" />
          <span className="pt-0.5">Validation</span>
        </button>
      </div>
    </aside>
  );
}

function Messages() {
  return (
    <section className="flex h-[95px] shrink-0 flex-col">
      <PanelHeader title="Messages" />
      <div className="flex-1 border border-[#a0a0a0] bg-white">
        <table className="w-full table-fixed border-collapse text-left">
          <thead>
            <tr className="h-6 border-b border-[#a0a0a0] bg-[#c4c4c6]">
              <th className="w-[600px] pl-[11px] font-normal"><span className="flex h-5 border-r border-[#9c9c9c] pt-0.5">Description</span></th>
              <th className="w-[60px] pl-[11px] font-normal"><span className="flex h-5 border-r border-[#9c9c9c] pt-0.5">Line</span></th>
              <th className="w-[60px] pl-[11px] font-normal"><span className="flex h-5 border-r border-[#9c9c9c] pt-0.5">C...</span></th>
              <th aria-label="Empty" />
            </tr>
          </thead>
        </table>
      </div>
    </section>
  );
}

function StatusBar() {
  return (
    <footer className="relative flex h-[34px] shrink-0 items-center bg-[#007acc] pt-0.5 pl-1 text-white">
      <span>Page1</span>
      <div className="ml-auto flex h-full items-center border-l border-[#6db3e2] pr-5 pl-1">
        <Tool name="fitWidth" label="Page width" />
        <span className="w-px" />
        <Tool name="fitPage" label="Whole page" />
        <span className="w-px" />
        <Tool name="actualSize" label="Actual size" />
        <span className="ml-1.5">1...</span>
        <button type="button" aria-label="Zoom out" className="ml-1 h-[3px] w-2.5 bg-white" />
        <input
          type="range"
          aria-label="Zoom"
          defaultValue={50}
          className="mx-2 h-4 w-[98px] appearance-none bg-[linear-gradient(#8cc4ea,#8cc4ea)] bg-[size:100%_1px] bg-center bg-no-repeat [&::-webkit-slider-thumb]:h-3 [&::-webkit-slider-thumb]:w-1 [&::-webkit-slider-thumb]:appearance-none [&::-webkit-slider-thumb]:bg-white"
        />
        <button type="button" aria-label="Zoom in" className="flex items-center">
          <svg viewBox="0 0 10 10" className="h-2.5 w-2.5"><path d="M5 0v10M0 5h10" stroke="#fff" strokeWidth="3" /></svg>
        </button>
      </div>
      <span className="pointer-events-none absolute right-4 bottom-1.5 font-['Liberation_Sans','Noto_Sans_CJK_SC',sans-serif] text-[17px] leading-6 text-[#c3d6e4] [text-shadow:1px_1px_1px_#35556d]">
        CSDN @腐骨穿心
      </span>
    </footer>
  );
}

export default function App() {
  return (
    <div className="flex h-screen flex-col overflow-hidden bg-[#eeeef0] font-['Liberation_Mono',monospace] text-[15px] leading-[18px] text-black">
      <TitleBar />
      <MenuBar />
      <MainToolbar />
      <FormatToolbar />
      <div className="flex min-h-0 flex-1">
        <ObjectsToolbar />
        <div className="flex min-w-0 flex-1 flex-col">
          <div className="flex min-h-0 flex-1 gap-[3px] bg-[#e2e3e5] *:bg-[#eeeef0]">
            <Designer />
            <PropertiesPanel />
            <DataPanel />
          </div>
          <div className="h-[3px] shrink-0 bg-[#e2e3e5]" />
          <Messages />
        </div>
      </div>
      <StatusBar />
    </div>
  );
}
